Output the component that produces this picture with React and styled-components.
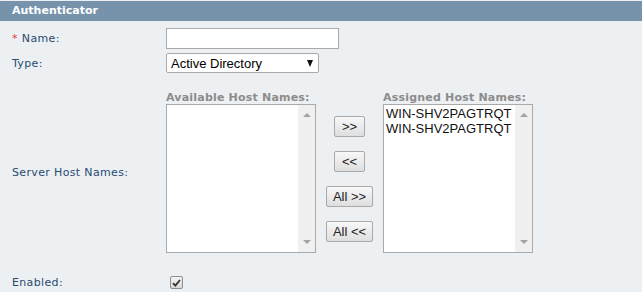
import React from 'react';
import styled, { createGlobalStyle } from 'styled-components';

const GlobalStyle = createGlobalStyle`
  html, body {
    margin: 0;
    padding: 0;
    background: #ecf0f3;
  }
  body {
    font-family: "DejaVu Sans", Verdana, sans-serif;
  }
`;

const Panel = styled.div`
  width: 642px;
  height: 292px;
  padding-top: 1px;
  box-sizing: border-box;
  background: #ecf0f3;
  overflow: hidden;
`;

const Header = styled.div`
  height: 20px;
  background: #7693ab;
  color: #fff;
  font-weight: bold;
  font-size: 11px;
  line-height: 20px;
  padding-left: 12px;
`;

const Row = styled.div`
  display: flex;
  align-items: center;
  margin-top: ${(p) => p.$top}px;
`;

const Label = styled.div`
  width: 154px;
  padding-left: 12px;
  flex-shrink: 0;
  font-size: 11px;
  color: #2a4a70;
  letter-spacing: 0.35px;
`;

const Required = styled.span`
  color: #e0403a;
  margin-right: 4px;
`;

const TextInput = styled.input`
  width: 173px;
  height: 21px;
  box-sizing: border-box;
  border: 1px solid #a9a9a9;
  background: #fff;
  margin: 0;
  padding: 0 3px;
  font: 13px "Liberation Sans", Arial, sans-serif;
  outline: none;
`;

const Select = styled.div`
  width: 153px;
  height: 20px;
  box-sizing: border-box;
  border: 1px solid #a9a9a9;
  border-radius: 2px;
  background: #fff;
  display: flex;
  align-items: center;
  justify-content: space-between;
  padding: 0 5px 0 4px;
  font: 13px "Liberation Sans", Arial, sans-serif;
  color: #000;
`;

const Caret = styled.span`
  width: 0;
  height: 0;
  border-left: 3.5px solid transparent;
  border-right: 3.5px solid transparent;
  border-top: 7px solid #111;
`;

const Picker = styled.div`
  display: flex;
  align-items: center;
`;

const ListColumn = styled.div`
  display: flex;
  flex-direction: column;
`;

const ListHeading = styled.div`
  font-size: 11px;
  font-weight: bold;
  color: #8c8c8c;
  height: 13px;
  line-height: 13px;
  letter-spacing: 0.2px;
  white-space: nowrap;
`;

const ListBox = styled.div`
  width: 150px;
  height: 149px;
  box-sizing: border-box;
  border: 1px solid #a9a9a9;
  background: #fff;
  display: flex;
`;

const Items = styled.div`
  flex: 1;
  padding: 1px 0 0 2px;
  overflow: hidden;
  font: 13px "Liberation Sans", Arial, sans-serif;
  line-height: 15px;
  color: #111;
  white-space: nowrap;
`;

const Scrollbar = styled.div`
  width: 17px;
  background: #f0f0f0;
  display: flex;
  flex-direction: column;
  justify-content: space-between;
  align-items: center;
  padding: 8px 0 8px;
`;

const Arrow = styled.span`
  width: 0;
  height: 0;
  border-left: 4px solid transparent;
  border-right: 4px solid transparent;
  ${(p) =>
    p.$down
      ? 'border-top: 4px solid #a3a3a3;'
      : 'border-bottom: 4px solid #a3a3a3;'}
`;

const Buttons = styled.div`
  width: 67px;
  margin-top: 13px;
  display: flex;
  flex-direction: column;
  align-items: center;
  gap: 14px;
`;

const MoveButton = styled.button`
  height: 21px;
  min-width: 31px;
  box-sizing: border-box;
  margin: 0;
  padding: 0 6px;
  border: 1px solid #a9a9a9;
  border-radius: 2px;
  background: linear-gradient(#f8f8f8, #dedede);
  font: 13px "Liberation Sans", Arial, sans-serif;
  color: #222;
  cursor: pointer;
`;

const Check = styled.span`
  margin-left: 4px;
  width: 13px;
  height: 13px;
  box-sizing: border-box;
  border: 1px solid #8e8e8e;
  border-radius: 2px;
  background: linear-gradient(#f4f4f4, #d8d8d8);
  display: flex;
  align-items: center;
  justify-content: center;
`;

const assigned = ['WIN-SHV2PAGTRQT', 'WIN-SHV2PAGTRQT'];

function HostList({ title, items }) {
  return (
    <ListColumn>
      <ListHeading>{title}</ListHeading>
      <ListBox>
        <Items>
          {items.map((name, i) => (
            <div key={i}>{name}</div>
          ))}
        </Items>
        <Scrollbar>
          <Arrow />
          <Arrow $down />
        </Scrollbar>
      </ListBox>
    </ListColumn>
  );
}

export default function App() {
  return (
    <>
      <GlobalStyle />
      <Panel>
        <Header>Authenticator</Header>

        <Row $top={7}>
          <Label>
            <Required>*</Required>Name:
          </Label>
          <TextInput type="text" />
        </Row>

        <Row $top={4}>
          <Label>Type:</Label>
          <Select>
            <span>Active Directory</span>
            <Caret />
          </Select>
        </Row>

        <Row $top={18}>
          <Label>Server Host Names:</Label>
          <Picker>
            <HostList title="Available Host Names:" items={[]} />
            <Buttons>
              <MoveButton>&gt;&gt;</MoveButton>
              <MoveButton>&lt;&lt;</MoveButton>
              <MoveButton>All &gt;&gt;</MoveButton>
              <MoveButton>All &lt;&lt;</MoveButton>
            </Buttons>
            <HostList title="Assigned Host Names:" items={assigned} />
          </Picker>
        </Row>

        <Row $top={23}>
          <Label>Enabled:</Label>
          <Check>
            <svg width="9" height="8" viewBox="0 0 9 8">
              <path d="M1 4.2 L3.4 6.6 L8 1" fill="none" stroke="#333" strokeWidth="1.8" />
            </svg>
          </Check>
        </Row>
      </Panel>
    </>
  );
}
